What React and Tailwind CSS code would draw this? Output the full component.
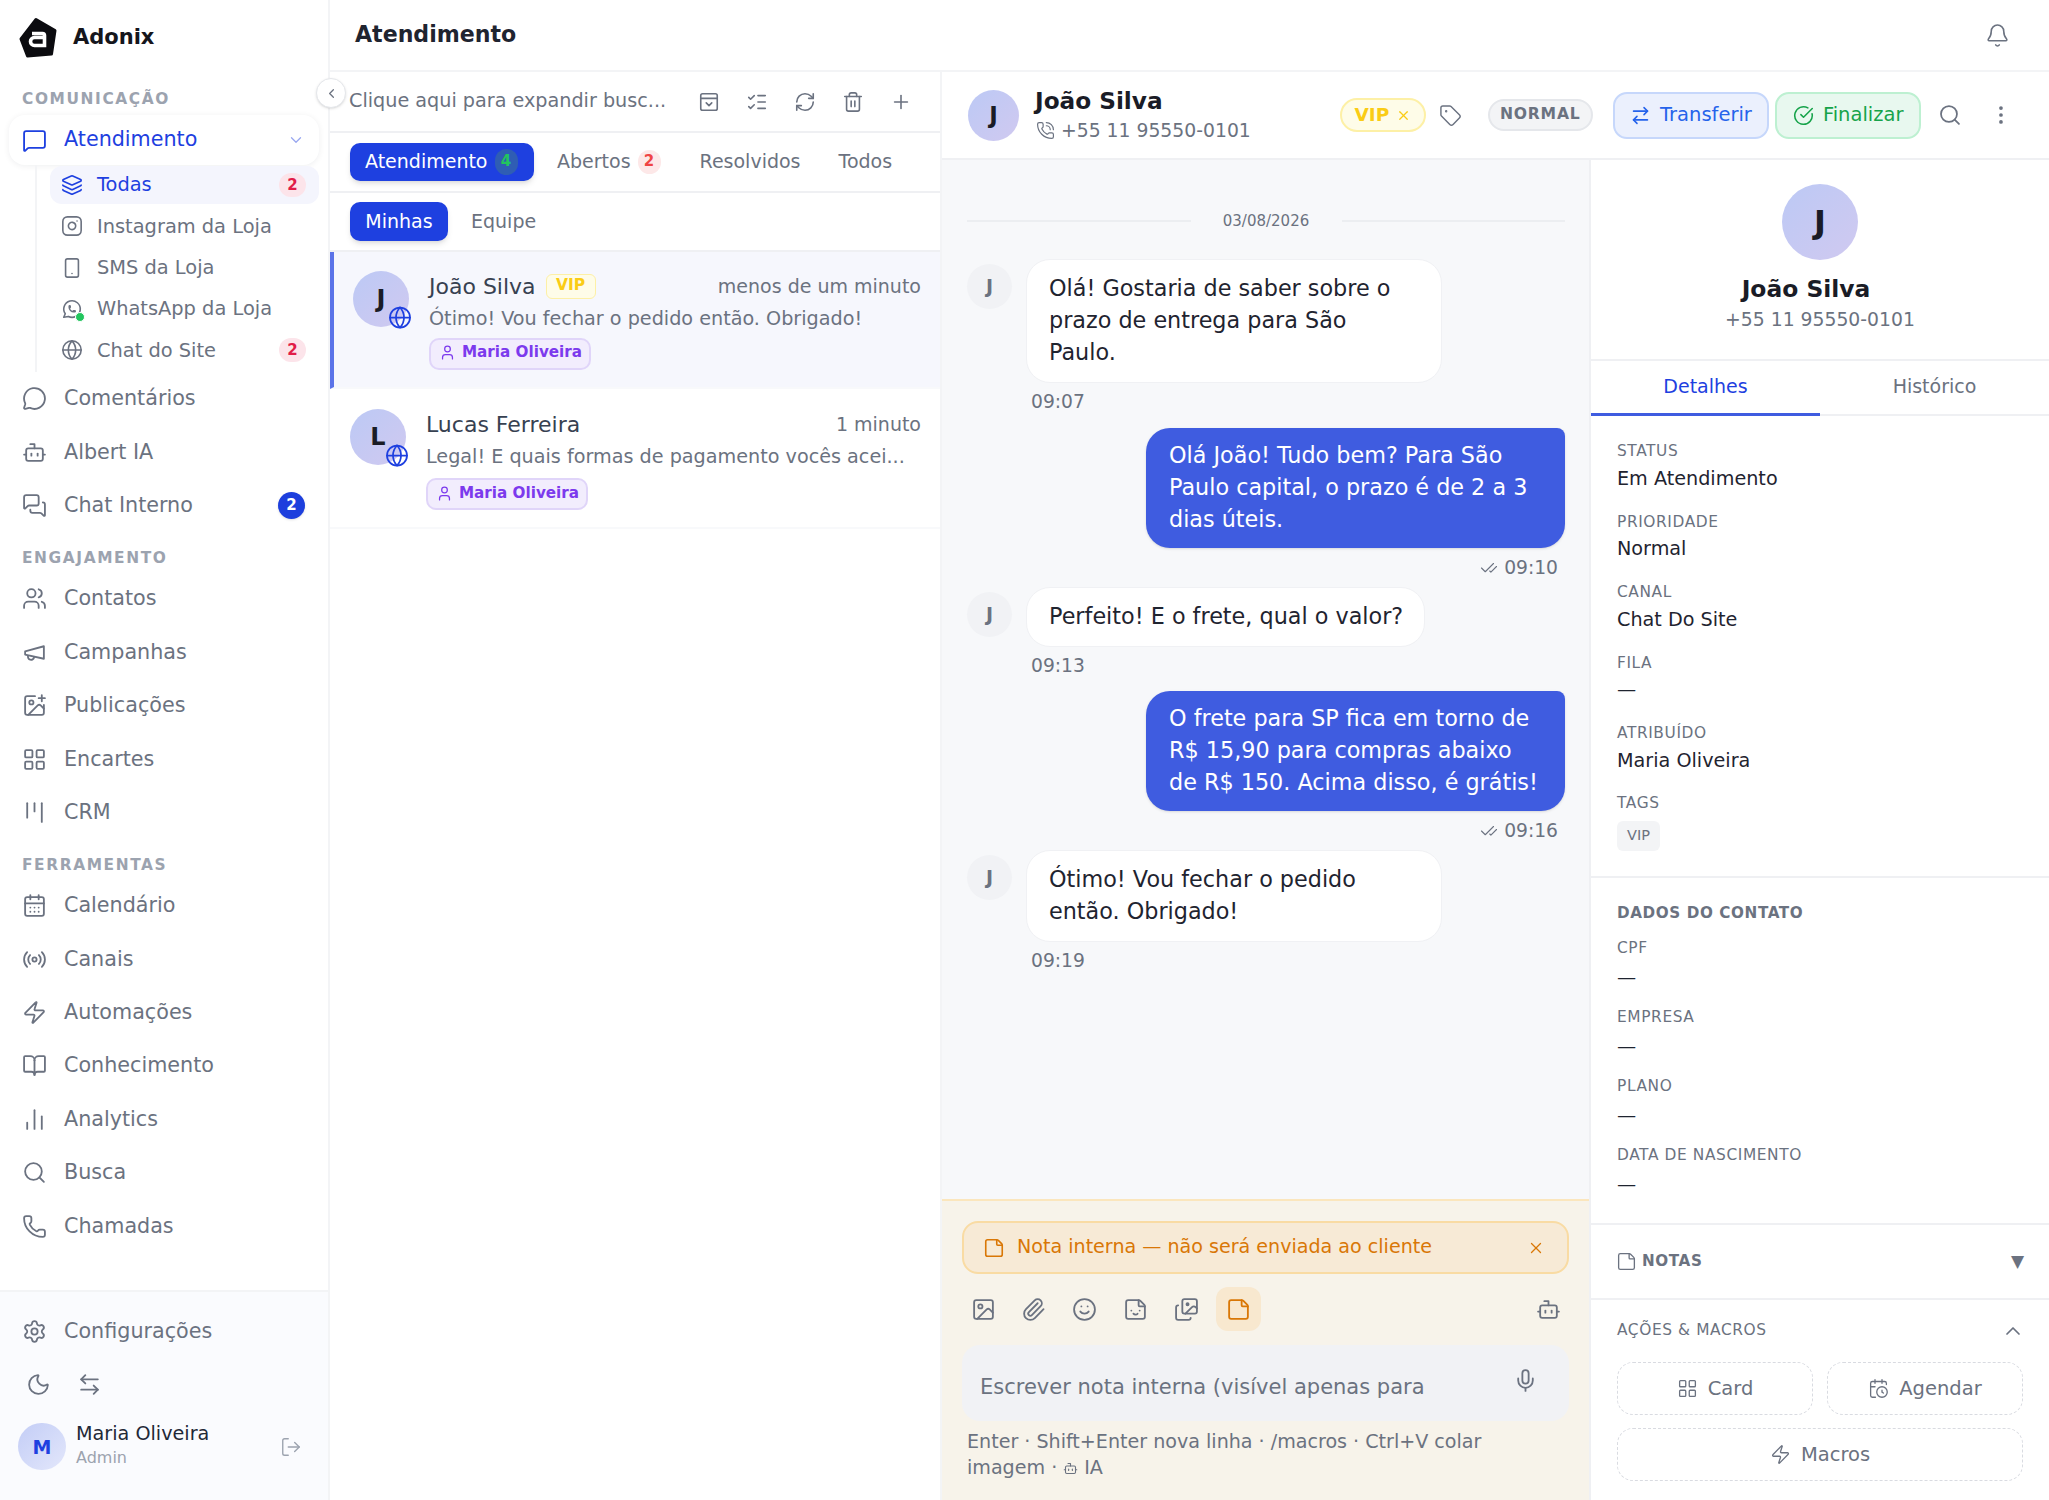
import {
  MessageSquare, ChevronDown, ChevronLeft, ChevronUp, Layers, Instagram, Smartphone, Globe, MessageCircle, Bot,
  MessagesSquare, Users, ImagePlus, LayoutGrid, Kanban, CalendarDays, Radio, Zap, BookOpen,
  ChartNoAxesColumn, Search, Phone, Settings, Moon, ArrowLeftRight, LogOut, ListChecks, RefreshCw, Trash2, Plus,
  User, PhoneCall, X, Tag, ArrowRightLeft, CircleCheckBig, EllipsisVertical, CheckCheck, Image, Paperclip, Smile,
  Sticker, Images, StickyNote, Mic, CalendarClock, Bell,
} from 'lucide-react';
import { TbBrandWhatsapp } from 'react-icons/tb';

function Logo() {
  return (
    <svg width="40" height="43" viewBox="0 0 40 43">
      <path d="M18 3.5 37 14.5 33.5 38 9.5 40 3 23Z" fill="#0b0b0f" stroke="#0b0b0f" strokeWidth="3" strokeLinejoin="round" />
      <path d="M14 17.5h10.5a2 2 0 0 1 2 2v10h-10a4 4 0 0 1 0-8h10" fill="none" stroke="#fff" strokeWidth="3.6" />
    </svg>
  );
}

// older megaphone shape, lucide's current one has a different horn
function MegaphoneIcon(props) {
  return (
    <svg width={props.size} height={props.size} viewBox="0 0 24 24" fill="none" stroke="currentColor" strokeWidth={props.strokeWidth} strokeLinecap="round" strokeLinejoin="round" className={props.className}>
      <path d="m3 11 18-5v12L3 14v-3z" />
      <path d="M11.6 16.8a3 3 0 1 1-5.8-1.6" />
    </svg>
  );
}

function NavItem({ icon: Icon, label, badge }) {
  return (
    <div className="h-[53.4px] flex items-center pl-[22px] pr-[23px] text-[20.7px] text-[#6b7280]">
      <Icon size={25} strokeWidth={1.75} className="shrink-0" />
      <span className="ml-[17px] flex-1">{label}</span>
      {badge && (
        <span className="w-[27px] h-[27px] rounded-full bg-[#1d3fdd] text-white text-[15px] font-bold flex items-center justify-center shadow">
          {badge}
        </span>
      )}
    </div>
  );
}

function SubItem({ icon, label, badge, active }) {
  return (
    <div className={`h-[38px] mt-[3.3px] first:mt-0 ml-[13px] flex items-center pl-[11px] pr-[13px] rounded-[12px] text-[19.4px] ${active ? 'bg-[#f4f5fd] text-[#1e40e0]' : 'text-[#6b7280]'}`}>
      <span className="w-[22px] h-[22px] shrink-0 flex items-center justify-center">{icon}</span>
      <span className="ml-[14px] flex-1">{label}</span>
      {badge && (
        <span className="w-[27px] h-[24px] rounded-full bg-[#fce4ea] text-[#e11d48] text-[15px] font-bold flex items-center justify-center">
          {badge}
        </span>
      )}
    </div>
  );
}

function SectionLabel({ children }) {
  return (
    <div className="h-[40px] pt-[13px] pl-[22px] flex items-center text-[15.4px] font-bold tracking-[1.6px] text-[#9ca3af]">
      {children}
    </div>
  );
}

function Sidebar() {
  return (
    <aside className="w-[330px] shrink-0 h-full border-r-2 border-[#f3f4f6] flex flex-col relative bg-white">
      <div className="h-[75px] pl-[18px] flex items-center">
        <Logo />
        <span className="ml-[15px] text-[21px] font-bold text-[#15161c]">Adonix</span>
      </div>
      <div className="h-[24px] mt-[13px] pl-[22px] flex items-center text-[15.4px] font-bold tracking-[1.6px] text-[#9ca3af]">COMUNICAÇÃO</div>
      <div className="mt-[3px] mx-[9px] h-[50px] rounded-[16px] bg-white shadow-[0_1px_6px_rgba(17,24,39,0.07)] flex items-center pl-[13px] pr-[14px] text-[20.7px] text-[#1e40e0]">
        <MessageSquare size={25} strokeWidth={1.75} />
        <span className="ml-[17px] flex-1">Atendimento</span>
        <ChevronDown size={18} strokeWidth={1.75} className="text-[#9aa8f0]" />
      </div>
      <div className="ml-[35px] mr-[9px] h-[207px] pt-[1px] border-l-2 border-[#f3f4f6]">
        <SubItem active icon={<Layers size={22} strokeWidth={1.75} />} label="Todas" badge="2" />
        <SubItem icon={<Instagram size={22} strokeWidth={1.75} />} label="Instagram da Loja" />
        <SubItem icon={<Smartphone size={22} strokeWidth={1.75} />} label="SMS da Loja" />
        <SubItem
          icon={
            <span className="relative block w-[22px] h-[22px]">
              <TbBrandWhatsapp size={22} strokeWidth={1.75} />
              <span className="absolute right-[-2px] bottom-[-2px] w-[10px] h-[10px] rounded-full bg-[#22c55e] border border-white" />
            </span>
          }
          label="WhatsApp da Loja"
        />
        <SubItem icon={<Globe size={22} strokeWidth={1.75} />} label="Chat do Site" badge="2" />
      </div>
      <NavItem icon={MessageCircle} label="Comentários" />
      <NavItem icon={Bot} label="Albert IA" />
      <NavItem icon={MessagesSquare} label="Chat Interno" badge="2" />
      <SectionLabel>ENGAJAMENTO</SectionLabel>
      <NavItem icon={Users} label="Contatos" />
      <NavItem icon={MegaphoneIcon} label="Campanhas" />
      <NavItem icon={ImagePlus} label="Publicações" />
      <NavItem icon={LayoutGrid} label="Encartes" />
      <NavItem icon={Kanban} label="CRM" />
      <SectionLabel>FERRAMENTAS</SectionLabel>
      <NavItem icon={CalendarDays} label="Calendário" />
      <NavItem icon={Radio} label="Canais" />
      <NavItem icon={Zap} label="Automações" />
      <NavItem icon={BookOpen} label="Conhecimento" />
      <NavItem icon={ChartNoAxesColumn} label="Analytics" />
      <NavItem icon={Search} label="Busca" />
      <NavItem icon={Phone} label="Chamadas" />
      <div className="flex-1" />
      <div className="h-[210px] border-t-2 border-[#f3f4f6] bg-[#fafbfe] pt-[13px]">
        <NavItem icon={Settings} label="Configurações" />
        <div className="h-[40px] mt-[6px] flex items-center pl-[26px] text-[#6b7280]">
          <Moon size={25} strokeWidth={1.75} />
          <ArrowLeftRight size={25} strokeWidth={1.75} className="ml-[26px]" />
        </div>
        <div className="mt-[19px] flex items-center pl-[18px] pr-[26px]">
          <div className="w-[48px] h-[47px] rounded-full bg-linear-to-br from-[#c3cdf6] to-[#e3e7fb] text-[#1e40e0] text-[19px] font-bold flex items-center justify-center">M</div>
          <div className="ml-[10px] flex-1 -mt-[3px]">
            <div className="text-[19.2px] leading-[25px] text-[#1f2937]">Maria Oliveira</div>
            <div className="text-[16px] leading-[24px] text-[#9ca3af]">Admin</div>
          </div>
          <LogOut size={22} strokeWidth={1.5} className="text-[#9ca3af]" />
        </div>
      </div>
      <button className="absolute right-[-18px] top-[78px] z-10 w-[30px] h-[30px] rounded-full bg-white border border-[#e5e7eb] shadow-sm flex items-center justify-center text-[#6b7280]">
        <ChevronLeft size={15} />
      </button>
    </aside>
  );
}

function Conversation({ active, initial, name, vip, time, preview }) {
  return (
    <div className={`flex items-start border-b-2 border-[#f8f9fb] ${active ? 'h-[137px] bg-[#f6f7fd] border-l-4 border-l-[#5b73e8] pl-[19px] pt-[19px]' : 'h-[140px] pl-[20px] pt-[20px]'} pr-[19px]`}>
      <div className="relative w-[56px] h-[56px] shrink-0 rounded-full bg-linear-to-br from-[#bcc9f5] to-[#d0c9f0] flex items-center justify-center text-[24px] font-bold text-[#1a1c26]">
        {initial}
        <span className="absolute right-[-3px] bottom-[-2px] w-[24px] h-[24px] rounded-full flex items-center justify-center text-[#1e40e0]">
          <Globe size={27} strokeWidth={1.75} />
        </span>
      </div>
      <div className="ml-[20px] flex-1 min-w-0">
        <div className="h-[30px] flex items-center">
          <span className="text-[22px] text-[#374151]">{name}</span>
          {vip && (
            <span className="ml-[10px] w-[50px] h-[25px] rounded-[6px] bg-[#fefce8] border border-[#fdf0a6] text-[#facc15] text-[15.5px] font-bold flex items-center justify-center">VIP</span>
          )}
          <span className="ml-auto text-[19px] text-[#6b7280]">{time}</span>
        </div>
        <div className="mt-[4px] text-[19.2px] leading-[28px] text-[#6b7280] truncate">{preview}</div>
        <div className={`${active ? 'mt-[5px] pb-[3px]' : 'mt-[7px] pb-[1px]'} w-[162px] h-[32px] rounded-[10px] bg-[#f2edfd] border-2 border-[#e0d5f9] flex items-center pl-[8px] text-[#7c3aed] text-[15.2px] font-bold whitespace-nowrap`}>
          <User size={17} strokeWidth={1.75} />
          <span className="ml-[6px]">Maria Oliveira</span>
        </div>
      </div>
    </div>
  );
}

function ListPanel() {
  return (
    <section className="w-[612px] shrink-0 h-full border-r-2 border-[#f3f4f6] flex flex-col bg-white">
      <div className="h-[61px] border-b-2 border-[#eff0f3] pl-[19px] flex items-center text-[#6b7280]">
        <span className="w-[343px] text-[19.2px] truncate">Clique aqui para expandir busc...</span>
        <span className="ml-[6px] w-[22px] flex justify-center">
          <svg width="22" height="22" viewBox="0 0 24 24" fill="none" stroke="currentColor" strokeWidth="1.75" strokeLinecap="round" strokeLinejoin="round">
            <rect x="3" y="3" width="18" height="18" rx="2" />
            <path d="M3 8h18M9 13l3 3 3-3" />
          </svg>
        </span>
        <ListChecks size={22} strokeWidth={1.75} className="ml-[26px]" />
        <RefreshCw size={22} strokeWidth={1.75} className="ml-[26px]" />
        <Trash2 size={22} strokeWidth={1.75} className="ml-[26px]" />
        <Plus size={22} strokeWidth={1.75} className="ml-[26px]" />
      </div>
      <div className="h-[60px] border-b-2 border-[#eff0f3] pl-[20px] pb-[1px] flex items-center text-[19px] text-[#6b7280]">
        <div className="w-[184px] h-[38px] rounded-[10px] bg-[#1e40e0] shadow-md text-white flex items-center pl-[15px]">
          Atendimento
          <span className="ml-[7px] w-[23px] h-[26px] rounded-full bg-[#2f5db4] text-[#22c55e] text-[15px] font-bold flex items-center justify-center">4</span>
        </div>
        <span className="ml-[23px]">Abertos</span>
        <span className="ml-[7px] w-[23px] h-[24px] rounded-full bg-[#fde8e8] text-[#ef4444] text-[15px] font-bold flex items-center justify-center">2</span>
        <span className="ml-[39px]">Resolvidos</span>
        <span className="ml-[38px]">Todos</span>
      </div>
      <div className="h-[59px] border-b-2 border-[#eff0f3] pl-[20px] pb-[1px] flex items-center text-[19px] text-[#6b7280]">
        <div className="w-[98px] h-[39px] rounded-[10px] bg-[#1e40e0] shadow-md text-white flex items-center justify-center">Minhas</div>
        <span className="ml-[23px]">Equipe</span>
      </div>
      <Conversation active initial="J" name="João Silva" vip time="menos de um minuto" preview="Ótimo! Vou fechar o pedido então. Obrigado!" />
      <Conversation initial="L" name="Lucas Ferreira" time="1 minuto" preview="Legal! E quais formas de pagamento vocês acei..." />
    </section>
  );
}

function Chip({ className, children }) {
  return <div className={`flex items-center justify-center rounded-[14px] border-2 whitespace-nowrap ${className}`}>{children}</div>;
}

function ChatHeader() {
  return (
    <div className="h-[88px] shrink-0 border-b-2 border-[#eff0f3] bg-white flex items-center pl-[26px] pr-[36px]">
      <div className="w-[51px] h-[51px] shrink-0 rounded-full bg-linear-to-br from-[#bcc9f5] to-[#d0c9f0] text-[23px] font-bold text-[#1a1c26] flex items-center justify-center">J</div>
      <div className="ml-[16px] w-[305px] shrink-0">
        <div className="text-[23.2px] leading-[30px] font-bold text-[#1a1c26]">João Silva</div>
        <div className="mt-[1px] flex items-center text-[18.8px] leading-[28px] text-[#6b7280]">
          <PhoneCall size={19} strokeWidth={1.5} className="ml-[1px]" />
          <span className="ml-[6px]">+55 11 95550-0101</span>
        </div>
      </div>
      <Chip className="w-[86px] h-[34px] rounded-[17px] bg-[#fefce8] border-[#fdf0a6] text-[#facc15]">
        <span className="text-[18.5px] font-bold">VIP</span>
        <X size={15} strokeWidth={2} className="ml-[7px]" />
      </Chip>
      <Tag size={23} strokeWidth={1.5} className="ml-[13px] text-[#6b7280]" />
      <Chip className="ml-[26px] w-[105px] h-[32px] rounded-[16px] bg-[#f3f4f6] border-[#e5e7eb] text-[#6b7280] text-[15.6px] font-bold tracking-[0.8px]">NORMAL</Chip>
      <Chip className="ml-[20px] w-[157px] h-[47px] bg-[#ebf0fd] border-[#c6d7fb] text-[#2563eb] text-[19.5px]">
        <ArrowRightLeft size={21} strokeWidth={1.75} />
        <span className="ml-[9px]">Transferir</span>
      </Chip>
      <Chip className="ml-[6px] w-[146px] h-[47px] bg-[#e8f8ef] border-[#bdf0d1] text-[#16a34a] text-[19.5px]">
        <CircleCheckBig size={21} strokeWidth={1.75} />
        <span className="ml-[9px]">Finalizar</span>
      </Chip>
      <Search size={24} strokeWidth={1.75} className="ml-[17px] text-[#6b7280]" />
      <EllipsisVertical size={24} strokeWidth={1.75} className="ml-[27px] text-[#6b7280]" />
    </div>
  );
}

function Incoming({ text, time, width, gap }) {
  return (
    <div className={gap}>
      <div className="flex items-start">
        <div className="mt-[5px] w-[45px] h-[45px] rounded-full bg-[#f1f2f5] text-[#6b7280] text-[19px] font-bold flex items-center justify-center shrink-0">J</div>
        <div className={`ml-[14px] ${width} pl-[22px] pt-[12px] pb-[14px] rounded-[24px] bg-white border border-[#f0f1f4] text-[22.3px] leading-[32px] text-[#1f2430]`}>{text}</div>
      </div>
      <div className="ml-[64px] mt-[6px] text-[18.7px] leading-[26px] text-[#6b7280]">{time}</div>
    </div>
  );
}

function Outgoing({ text, time, gap }) {
  return (
    <div className={gap}>
      <div className="ml-auto w-[419px] px-[23px] pt-[11px] pb-[13px] rounded-[24px] rounded-tr-[8px] bg-[#3f5ce0] shadow-sm text-[22.3px] leading-[32px] text-white">{text}</div>
      <div className="mt-[7px] pr-[7px] flex items-center justify-end text-[18.7px] leading-[26px] text-[#6b7280]">
        <CheckCheck size={18} strokeWidth={1.5} />
        <span className="ml-[6px]">{time}</span>
      </div>
    </div>
  );
}

function Messages() {
  return (
    <div className="flex-1 min-h-0 bg-[#f7f8fa] pl-[25px] pr-[24px] pt-[50px]">
      <div className="flex items-center text-[15px] leading-[22px] text-[#6b7280]">
        <span className="flex-1 h-[2px] bg-[#eceef1]" />
        <span className="w-[151px] text-center">03/08/2026</span>
        <span className="flex-1 h-[2px] bg-[#eceef1]" />
      </div>
      <Incoming gap="mt-[27px] mb-[12.5px]" width="w-[416px] pr-[40px]" time="09:07" text="Olá! Gostaria de saber sobre o prazo de entrega para São Paulo." />
      <Outgoing gap="mb-[6.5px]" time="09:10" text="Olá João! Tudo bem? Para São Paulo capital, o prazo é de 2 a 3 dias úteis." />
      <Incoming gap="mb-[12px]" width="w-[399px] pr-[20px] whitespace-nowrap" time="09:13" text="Perfeito! E o frete, qual o valor?" />
      <Outgoing gap="mb-[6px]" time="09:16" text="O frete para SP fica em torno de R$ 15,90 para compras abaixo de R$ 150. Acima disso, é grátis!" />
      <Incoming width="w-[416px] pr-[40px]" time="09:19" text="Ótimo! Vou fechar o pedido então. Obrigado!" />
    </div>
  );
}

function Composer() {
  return (
    <div className="h-[301px] shrink-0 border-t-2 border-[#fbe6bd] bg-[#f7f3ea] px-[20px] pt-[20px]">
      <div className="h-[53px] rounded-[16px] bg-[#f7ead6] border-2 border-[#f9dba3] flex items-center pl-[19px] pr-[22px] text-[19.1px] text-[#d97706]">
        <StickyNote size={22} strokeWidth={1.75} />
        <span className="ml-[12px] flex-1">Nota interna — não será enviada ao cliente</span>
        <X size={18} strokeWidth={1.75} />
      </div>
      <div className="h-[44px] mt-[13px] flex items-center text-[#6b7280]">
        <span className="w-[42px] flex justify-center"><Image size={25} strokeWidth={1.75} /></span>
        <span className="ml-[7px] w-[44px] flex justify-center"><Paperclip size={25} strokeWidth={1.75} /></span>
        <span className="ml-[7px] w-[44px] flex justify-center"><Smile size={25} strokeWidth={1.75} /></span>
        <span className="ml-[7px] w-[44px] flex justify-center"><Sticker size={25} strokeWidth={1.75} /></span>
        <span className="ml-[7px] w-[44px] flex justify-center"><Images size={25} strokeWidth={1.75} /></span>
        <span className="ml-[8px] w-[45px] h-[44px] rounded-[12px] bg-[#f8e8cf] flex items-center justify-center text-[#d97706]"><StickyNote size={25} strokeWidth={1.75} /></span>
        <Bot size={25} strokeWidth={1.75} className="ml-auto mr-[8px]" />
      </div>
      <div className="h-[76px] mt-[14px] rounded-[18px] bg-[#f1f2f5] flex items-center pl-[18px] pr-[31px] text-[21px] text-[#6b7280]">
        <span className="flex-1 pt-[9px]">Escrever nota interna (visível apenas para</span>
        <Mic size={25} strokeWidth={1.75} className="mb-[6px]" />
      </div>
      <div className="mt-[8px] ml-[5px] text-[19.1px] leading-[26px] text-[#6b7280]">
        <div>Enter · Shift+Enter nova linha · /macros · Ctrl+V colar</div>
        <div className="flex items-center">
          <span>imagem ·</span>
          <Bot size={15} strokeWidth={1.75} className="ml-[6px]" />
          <span className="ml-[6px]">IA</span>
        </div>
      </div>
    </div>
  );
}

function Field({ label, value, valueGap, className }) {
  return (
    <div className={className}>
      <div className="text-[15.4px] leading-[22px] tracking-[0.6px] text-[#6b7280]">{label}</div>
      <div className={`${valueGap} text-[19.2px] leading-[28px] text-[#1f2430]`}>{value}</div>
    </div>
  );
}

function DashedButton({ icon: Icon, label, className }) {
  return (
    <div className={`h-[53px] flex items-center justify-center rounded-[16px] border border-dashed border-[#d9dbe1] text-[#6b7280] text-[19.5px] ${className}`}>
      <Icon size={21} strokeWidth={1.5} />
      <span className="ml-[10px]">{label}</span>
    </div>
  );
}

function DetailsPanel() {
  return (
    <section className="flex-1 min-w-0 h-full overflow-hidden bg-white flex flex-col">
      <div className="h-[201px] shrink-0 border-b-2 border-[#eff0f3] pt-[24px] flex flex-col items-center">
        <div className="w-[76px] h-[76px] rounded-full bg-linear-to-br from-[#bcc9f5] to-[#d0c9f0] text-[32px] font-bold text-[#1a1c26] flex items-center justify-center">J</div>
        <div className="mt-[14px] mr-[28px] text-[23.4px] leading-[30px] font-bold text-[#1a1c26]">João Silva</div>
        <div className="mt-[2px] text-[18.8px] leading-[28px] text-[#6b7280]">+55 11 95550-0101</div>
      </div>
      <div className="h-[55px] shrink-0 border-b-2 border-[#eff0f3] flex text-[19px]">
        <div className="w-[229px] h-[55px] pb-[1px] border-b-[3px] border-[#3f5ce0] text-[#1e40e0] flex items-center justify-center">Detalhes</div>
        <div className="flex-1 text-[#6b7280] flex items-center justify-center pb-[2px]">Histórico</div>
      </div>
      <div className="h-[462px] shrink-0 border-b-2 border-[#eff0f3] px-[26px] pt-[24px]">
        <Field label="STATUS" value="Em Atendimento" valueGap="mt-[2.6px]" />
        <Field label="PRIORIDADE" value="Normal" valueGap="mt-[2.6px]" className="mt-[18px]" />
        <Field label="CANAL" value="Chat Do Site" valueGap="mt-[2.6px]" className="mt-[18px]" />
        <Field label="FILA" value="—" valueGap="mt-[2.6px]" className="mt-[18px]" />
        <Field label="ATRIBUÍDO" value="Maria Oliveira" valueGap="mt-[2.6px]" className="mt-[18px]" />
        <div className="mt-[17px] text-[15.4px] leading-[22px] tracking-[0.6px] text-[#6b7280]">TAGS</div>
        <div className="mt-[7px] w-[43px] h-[30px] rounded-[6px] bg-[#f3f4f6] text-[#6b7280] text-[14.5px] flex items-center justify-center">VIP</div>
      </div>
      <div className="h-[347px] shrink-0 border-b-2 border-[#eff0f3] px-[26px] pt-[24px]">
        <div className="text-[15.2px] leading-[22px] font-bold tracking-[0.6px] text-[#6b7280]">DADOS DO CONTATO</div>
        <Field label="CPF" value="—" valueGap="mt-[5px]" className="mt-[13px]" />
        <Field label="EMPRESA" value="—" valueGap="mt-[5px]" className="mt-[14px]" />
        <Field label="PLANO" value="—" valueGap="mt-[5px]" className="mt-[14px]" />
        <Field label="DATA DE NASCIMENTO" value="—" valueGap="mt-[5px]" className="mt-[14px]" />
      </div>
      <div className="h-[75px] shrink-0 border-b-2 border-[#eff0f3] pl-[25px] pr-[25px] flex items-center text-[#6b7280]">
        <StickyNote size={21} strokeWidth={1.5} />
        <span className="ml-[5px] flex-1 text-[15.2px] font-bold tracking-[0.6px]">NOTAS</span>
        <span className="text-[17px]">▼</span>
      </div>
      <div className="px-[26px] pt-[19px]">
        <div className="h-[24px] flex items-center text-[15.4px] tracking-[0.6px] text-[#6b7280]">
          <span className="flex-1">AÇÕES &amp; MACROS</span>
          <ChevronUp size={24} strokeWidth={1.75} className="-mr-[2px]" />
        </div>
        <div className="mt-[19px] grid grid-cols-2 gap-x-[14px] gap-y-[13px] w-[406px]">
          <DashedButton icon={LayoutGrid} label="Card" />
          <DashedButton icon={CalendarClock} label="Agendar" />
          <DashedButton icon={Zap} label="Macros" className="col-span-2" />
        </div>
      </div>
    </section>
  );
}

export default function App() {
  return (
    <div className="w-full h-screen overflow-hidden flex bg-white font-['DejaVu_Sans',sans-serif]">
      <Sidebar />
      <div className="flex-1 min-w-0 flex flex-col">
        <header className="h-[72px] shrink-0 border-b-2 border-[#f3f4f6] pl-[25px] pr-[39px] flex items-center">
          <h1 className="flex-1 text-[22.1px] font-bold text-[#1f2430]">Atendimento</h1>
          <Bell size={25} strokeWidth={1.5} className="text-[#6b7280]" />
        </header>
        <div className="flex-1 min-h-0 flex">
          <ListPanel />
          <div className="flex-1 min-w-0 h-full flex flex-col">
            <ChatHeader />
            <div className="flex-1 min-h-0 flex">
              <div className="w-[649px] shrink-0 h-full border-r-2 border-[#eff0f3] flex flex-col">
                <Messages />
                <Composer />
              </div>
              <DetailsPanel />
            </div>
          </div>
        </div>
      </div>
    </div>
  );
}
